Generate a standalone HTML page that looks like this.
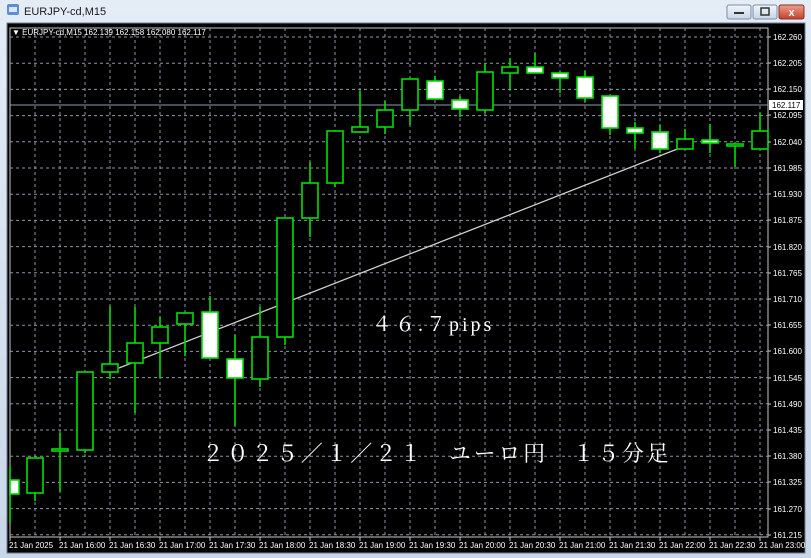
<!DOCTYPE html>
<html><head><meta charset="utf-8"><style>
html,body{margin:0;padding:0;width:811px;height:558px;overflow:hidden;background:#cfdbe9;}
svg{display:block}
</style></head><body>
<svg width="811" height="558" xmlns="http://www.w3.org/2000/svg" font-family="Liberation Sans, sans-serif">
<defs><linearGradient id="tb" x1="0" y1="0" x2="0" y2="1"><stop offset="0" stop-color="#e4ecf6"/><stop offset="1" stop-color="#c9d7e8"/></linearGradient>
<linearGradient id="cl" x1="0" y1="0" x2="0" y2="1"><stop offset="0" stop-color="#e8a08e"/><stop offset="1" stop-color="#c7402a"/></linearGradient>
<linearGradient id="bt" x1="0" y1="0" x2="0" y2="1"><stop offset="0" stop-color="#f2f6fb"/><stop offset="1" stop-color="#c6d4e6"/></linearGradient></defs>
<rect x="0" y="0" width="811" height="558" fill="url(#tb)"/>
<rect x="7" y="23" width="798" height="530" fill="#000" stroke="#6f7f94" stroke-width="1"/>
<rect x="7" y="4" width="12" height="11" rx="2" fill="#5b8fd0"/>
<rect x="9" y="7" width="8" height="5" fill="#d8e6f6"/>
<text x="24" y="15" font-size="11" fill="#1b1b1b">EURJPY-cd,M15</text>
<rect x="727" y="5" width="24" height="14" rx="2" fill="url(#bt)" stroke="#7d8ea6"/>
<rect x="734" y="12" width="10" height="2" fill="#333"/>
<rect x="753" y="5" width="24" height="14" rx="2" fill="url(#bt)" stroke="#7d8ea6"/>
<rect x="761" y="8" width="8" height="7" fill="none" stroke="#333" stroke-width="1.5"/>
<rect x="779" y="5" width="25" height="14" rx="2" fill="url(#cl)" stroke="#8a3020"/>
<text x="791.5" y="16" font-size="11" font-weight="bold" fill="#fff" text-anchor="middle">x</text>
<rect x="10" y="28" width="758" height="509" fill="none" stroke="#c8c8c8" stroke-width="1"/>
<g stroke="#8c96a8" stroke-width="1" stroke-dasharray="3,3">
<path d="M10 37H768M10 63.2H768M10 89.4H768M10 115.6H768M10 141.8H768M10 168H768M10 194.2H768M10 220.4H768M10 246.6H768M10 272.8H768M10 299H768M10 325.2H768M10 351.4H768M10 377.6H768M10 403.8H768M10 430H768M10 456.2H768M10 482.4H768M10 508.6H768M10 534.8H768"/>
<path d="M35 28V537M60 28V537M85 28V537M110 28V537M135 28V537M160 28V537M185 28V537M210 28V537M235 28V537M260 28V537M285 28V537M310 28V537M335 28V537M360 28V537M385 28V537M410 28V537M435 28V537M460 28V537M485 28V537M510 28V537M535 28V537M560 28V537M585 28V537M610 28V537M635 28V537M660 28V537M685 28V537M710 28V537M735 28V537M760 28V537"/>
</g>
<line x1="10" y1="105" x2="768" y2="105" stroke="#8e9bb0" stroke-width="1"/>
<line x1="119" y1="368" x2="685" y2="146" stroke="#d0d0d0" stroke-width="1.3"/>
<g stroke="#00e000" stroke-width="1.6">
<path d="M10 466V523M35 458V501M60 433V492M85 372V453M110 306V379M135 307V413M160 317V378M185 313V356M210 296V358M235 335V426M260 307V387M285 218V345M310 162V237M335 130V187M360 91V133M385 101V134M410 79V125M435 76V99M460 96V117M485 63V113M510 58V89M535 53V73M560 73V93M585 71V102M610 96V135M635 122V149M660 125V153M685 129V149M710 124V153M735 144V167M760 113V149"/>
</g>
<g stroke="#00e000" stroke-width="1.6">
<rect x="10" y="480" width="9" height="14" fill="#fff"/>
<rect x="27" y="458" width="16" height="35" fill="#000"/>
<rect x="52" y="449" width="16" height="2" fill="#000"/>
<rect x="77" y="372" width="16" height="78" fill="#000"/>
<rect x="102" y="364" width="16" height="8" fill="#000"/>
<rect x="127" y="343" width="16" height="20" fill="#000"/>
<rect x="152" y="327" width="16" height="16" fill="#000"/>
<rect x="177" y="313" width="16" height="11" fill="#000"/>
<rect x="202" y="312" width="16" height="46" fill="#fff"/>
<rect x="227" y="359" width="16" height="19" fill="#fff"/>
<rect x="252" y="337" width="16" height="42" fill="#000"/>
<rect x="277" y="218" width="16" height="119" fill="#000"/>
<rect x="302" y="183" width="16" height="35" fill="#000"/>
<rect x="327" y="131" width="16" height="52" fill="#000"/>
<rect x="352" y="127" width="16" height="5" fill="#000"/>
<rect x="377" y="110" width="16" height="17" fill="#000"/>
<rect x="402" y="79" width="16" height="31" fill="#000"/>
<rect x="427" y="81" width="16" height="18" fill="#fff"/>
<rect x="452" y="100" width="16" height="9" fill="#fff"/>
<rect x="477" y="72" width="16" height="38" fill="#000"/>
<rect x="502" y="67" width="16" height="6" fill="#000"/>
<rect x="527" y="67" width="16" height="6" fill="#fff"/>
<rect x="552" y="73" width="16" height="5" fill="#fff"/>
<rect x="577" y="77" width="16" height="21" fill="#fff"/>
<rect x="602" y="96" width="16" height="32" fill="#fff"/>
<rect x="627" y="128" width="16" height="5" fill="#fff"/>
<rect x="652" y="132" width="16" height="17" fill="#fff"/>
<rect x="677" y="139" width="16" height="10" fill="#000"/>
<rect x="702" y="140" width="16" height="3" fill="#fff"/>
<rect x="727" y="144" width="16" height="2" fill="#000"/>
<rect x="752" y="131" width="16" height="18" fill="#000"/>
</g>
<text x="12" y="35" font-size="8" fill="#fff">▼ EURJPY-cd,M15  162.139 162.158 162.080 162.117</text>
<g font-size="8" fill="#fff">
<text x="773" y="40">162.260</text><text x="773" y="66">162.205</text><text x="773" y="92">162.150</text><text x="773" y="118">162.095</text><text x="773" y="145">162.040</text><text x="773" y="171">161.985</text><text x="773" y="197">161.930</text><text x="773" y="223">161.875</text><text x="773" y="250">161.820</text><text x="773" y="276">161.765</text><text x="773" y="302">161.710</text><text x="773" y="328">161.655</text><text x="773" y="354">161.600</text><text x="773" y="381">161.545</text><text x="773" y="407">161.490</text><text x="773" y="433">161.435</text><text x="773" y="459">161.380</text><text x="773" y="485">161.325</text><text x="773" y="512">161.270</text><text x="773" y="538">161.215</text>
</g>
<g stroke="#c8c8c8"><path d="M768 37h3M768 63h3M768 89h3M768 115h3M768 142h3M768 168h3M768 194h3M768 220h3M768 247h3M768 273h3M768 299h3M768 325h3M768 351h3M768 378h3M768 404h3M768 430h3M768 456h3M768 482h3M768 509h3M768 535h3"/></g>
<rect x="769" y="100" width="34" height="10" fill="#fff"/>
<text x="772" y="108" font-size="8" fill="#000">162.117</text>
<g stroke="#c8c8c8"><path d="M10 537v4M60 537v4M110 537v4M160 537v4M210 537v4M260 537v4M310 537v4M360 537v4M410 537v4M460 537v4M510 537v4M560 537v4M610 537v4M660 537v4M710 537v4M760 537v4"/></g>
<g font-size="8" fill="#fff">
<text x="9" y="548">21 Jan 2025</text><text x="59" y="548">21 Jan 16:00</text><text x="109" y="548">21 Jan 16:30</text><text x="159" y="548">21 Jan 17:00</text><text x="209" y="548">21 Jan 17:30</text><text x="259" y="548">21 Jan 18:00</text><text x="309" y="548">21 Jan 18:30</text><text x="359" y="548">21 Jan 19:00</text><text x="409" y="548">21 Jan 19:30</text><text x="459" y="548">21 Jan 20:00</text><text x="509" y="548">21 Jan 20:30</text><text x="559" y="548">21 Jan 21:00</text><text x="609" y="548">21 Jan 21:30</text><text x="659" y="548">21 Jan 22:00</text><text x="709" y="548">21 Jan 22:30</text><text x="759" y="548">21 Jan 23:00</text>
</g>
<text x="372" y="331" font-size="20" fill="#fff" font-family="Liberation Serif, Noto Serif CJK SC, serif" letter-spacing="3">４６.７pips</text>
<text x="202" y="461" font-size="22" fill="#fff" font-family="Liberation Serif, Noto Serif CJK SC, serif" letter-spacing="2.7">２０２５／１／２１　ユーロ円　１５分足</text>
</svg>
</body></html>
